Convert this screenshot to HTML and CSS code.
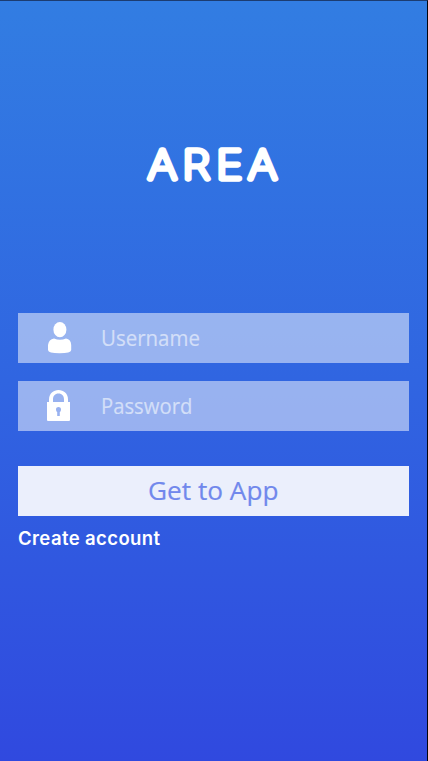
FILE: index.html
```
<!DOCTYPE html>
<html lang="en">
<head>
<meta charset="utf-8">
<title>AREA</title>
<link rel="stylesheet" href="styles.css">
</head>
<body>
<main class="screen">
  <h1 class="title">
    <svg class="wordmark" width="140" height="50" viewBox="0 0 140 50"><text transform="scale(1.12 1)" y="39.3" x="3.5 34.3 64.6 93.1">AREA</text></svg>
  </h1>
  <form class="login">
    <label class="field">
      <svg class="icon" width="30" height="34" viewBox="0 0 30 34"><ellipse cx="14.9" cy="8.7" rx="6.5" ry="7.6"/><path d="M9 17.4Q15 20 21 17.4Q26 18.3 26.2 24V29Q26 32.3 14.6 32.3T3 29V24Q3.8 18.3 9 17.4Z"/></svg>
      <span class="hint"><span class="fit username">Username</span></span>
    </label>
    <label class="field">
      <svg class="icon" width="30" height="34" viewBox="0 0 30 34"><path fill-rule="evenodd" d="M4 13V10.5C4 4.5 8.5 1 13.5 1S23 4.5 23 10.5V13H25V31Q25 32 24 32H3Q2 32 2 31V13ZM8 13H19V10.5C19 7 17 4.6 13.5 4.6S8 7 8 10.5ZM11 20.5Q11 22.5 12.2 23V27H14.8V23Q16 22.5 16 20.5C16 17.3 11 17.3 11 20.5Z"/></svg>
      <span class="hint"><span class="fit password">Password</span></span>
    </label>
    <button class="submit" type="button"><span class="fit action">Get to App</span></button>
  </form>
  <a class="create">Create account</a>
</main>
</body>
</html>
```
FILE: styles.css
```
* { box-sizing: border-box; }
body { margin: 0; }
.screen {
  display: flex;
  flex-direction: column;
  height: 761px;
  padding: 139px 18px 0;
  border-top: 1px solid #1c3c70;
  border-right: 1px solid #02040c;
  background: linear-gradient(#327de2, #3065e1 50%, #3049df);
}
.title { display: flex; justify-content: center; height: 50px; margin: 0 0 123px; }
.wordmark text {
  fill: #fff;
  stroke: #fff;
  stroke-width: 5.3px;
  stroke-linejoin: round;
  font: 100 40px Inter, sans-serif;
}
.login { display: flex; flex-direction: column; }
.field {
  display: flex;
  align-items: center;
  height: 50px;
  margin-bottom: 18px;
  padding-left: 27px;
  background: rgba(255, 255, 255, .5);
}
.icon { fill: #fff; margin-right: 26px; }
.hint { color: #d3dff8; font: 400 21px/48px "Open Sans", sans-serif; -webkit-text-stroke: .2px #d3dff8; }
.fit { display: inline-block; transform-origin: left center; }
.username { transform: scaleX(.975); }
.password { transform: scaleX(.965); }
.action { transform: translate(-1px, -1px) scaleX(1.008); }
.submit {
  height: 50px;
  margin-top: 17px;
  padding: 0;
  border: 0;
  background: #ebeffc;
  color: #7188ec;
  font: 400 26px/48px "Open Sans", sans-serif;
  -webkit-text-stroke: .2px #7188ec;
}
.create {
  margin-top: 10px;
  color: #fff;
  font: 600 18.5px/24px Inter, sans-serif;
  letter-spacing: .4px;
}
```
